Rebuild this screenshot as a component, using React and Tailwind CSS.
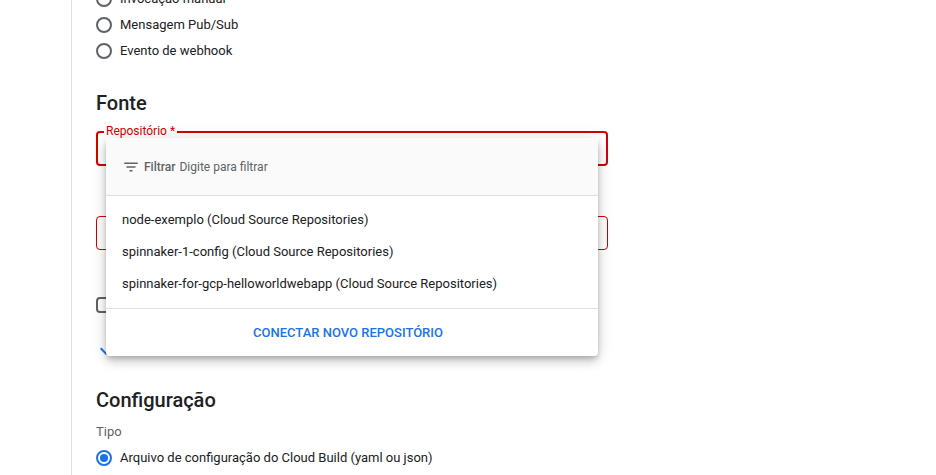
import { useState } from "react";

const repos = [
  "node-exemplo (Cloud Source Repositories)",
  "spinnaker-1-config (Cloud Source Repositories)",
  "spinnaker-for-gcp-helloworldwebapp (Cloud Source Repositories)",
];

function Radio({ label, checked }) {
  return (
    <div className="flex items-center h-[26px] gap-2">
      <span
        className={`w-4 h-4 rounded-full border-2 flex items-center justify-center shrink-0 ${
          checked ? "border-[#1a73e8]" : "border-[#5f6368]"
        }`}
      >
        {checked && <span className="w-2 h-2 rounded-full bg-[#1a73e8]" />}
      </span>
      <span className="text-[13px] text-[#202124]">{label}</span>
    </div>
  );
}

export default function App() {
  const [filter, setFilter] = useState("");

  return (
    <div className="relative w-[936px] h-[475px] overflow-hidden bg-white font-['Roboto',sans-serif]">
      <div className="flex h-full">
        <div className="w-[72px] shrink-0 border-r border-[#e0e0e0]" />
        <div className="pl-6 w-[536px]">
          <div className="mt-[-14px]">
            <Radio label="Invocação manual" />
            <Radio label="Mensagem Pub/Sub" />
            <Radio label="Evento de webhook" />
          </div>

          <h2 className="mt-[25px] h-7 leading-7 text-[20px] font-medium text-[#202124]">Fonte</h2>

          <div className="relative mt-[14px] h-[35px] rounded border-2 border-[#d50000]">
            <span className="absolute left-[6px] top-[-10px] px-0.5 bg-white text-[12px] leading-4 text-[#d50000]">
              Repositório *
            </span>
          </div>

          <div className="mt-[50px] h-[34px] rounded border border-[#d50000]" />

          <div className="mt-[47px] w-4 h-4 rounded-sm border-2 border-[#5f6368]" />

          <div className="mt-[26px] h-6 flex items-center">
            <svg width="24" height="24" viewBox="0 0 24 24" className="ml-[-2px]">
              <path d="M7.41 8.59 12 13.17l4.59-4.58L18 10l-6 6-6-6z" fill="#1a73e8" />
            </svg>
          </div>

          <h2 className="mt-[23px] h-7 leading-7 text-[20px] font-medium text-[#202124]">Configuração</h2>

          <div className="mt-[8px] text-[13px] leading-5 text-[#5f6368]">Tipo</div>

          <div className="mt-[3px]">
            <Radio label="Arquivo de configuração do Cloud Build (yaml ou json)" checked />
          </div>
        </div>
      </div>

      <div className="absolute left-[106px] top-[138px] w-[492px] bg-white rounded-sm shadow-[0_3px_5px_-1px_rgba(0,0,0,0.2),0_6px_10px_0_rgba(0,0,0,0.14),0_1px_18px_0_rgba(0,0,0,0.12)]">
        <div className="h-[58px] bg-[#fafafa] border-b border-[#e0e0e0] flex items-center pl-4 gap-1">
          <svg width="18" height="18" viewBox="0 0 24 24">
            <path d="M10 18h4v-2h-4v2zM3 6v2h18V6H3zm3 7h12v-2H6v2z" fill="#5f6368" />
          </svg>
          <span className="text-[12px] font-medium text-[#5f6368]">Filtrar</span>
          <input
            value={filter}
            onChange={(e) => setFilter(e.target.value)}
            placeholder="Digite para filtrar"
            className="flex-1 bg-transparent outline-none text-[12px] text-[#202124] placeholder:text-[#5f6368]"
          />
        </div>
        <div className="py-2 border-b border-[#e0e0e0]">
          {repos.map((r) => (
            <div key={r} className="h-8 flex items-center px-4 text-[13px] text-[#202124]">
              {r}
            </div>
          ))}
        </div>
        <div className="h-[47px] flex items-center justify-center pr-2">
          <span className="text-[13px] font-medium text-[#1a73e8]">CONECTAR NOVO REPOSITÓRIO</span>
        </div>
      </div>
    </div>
  );
}
